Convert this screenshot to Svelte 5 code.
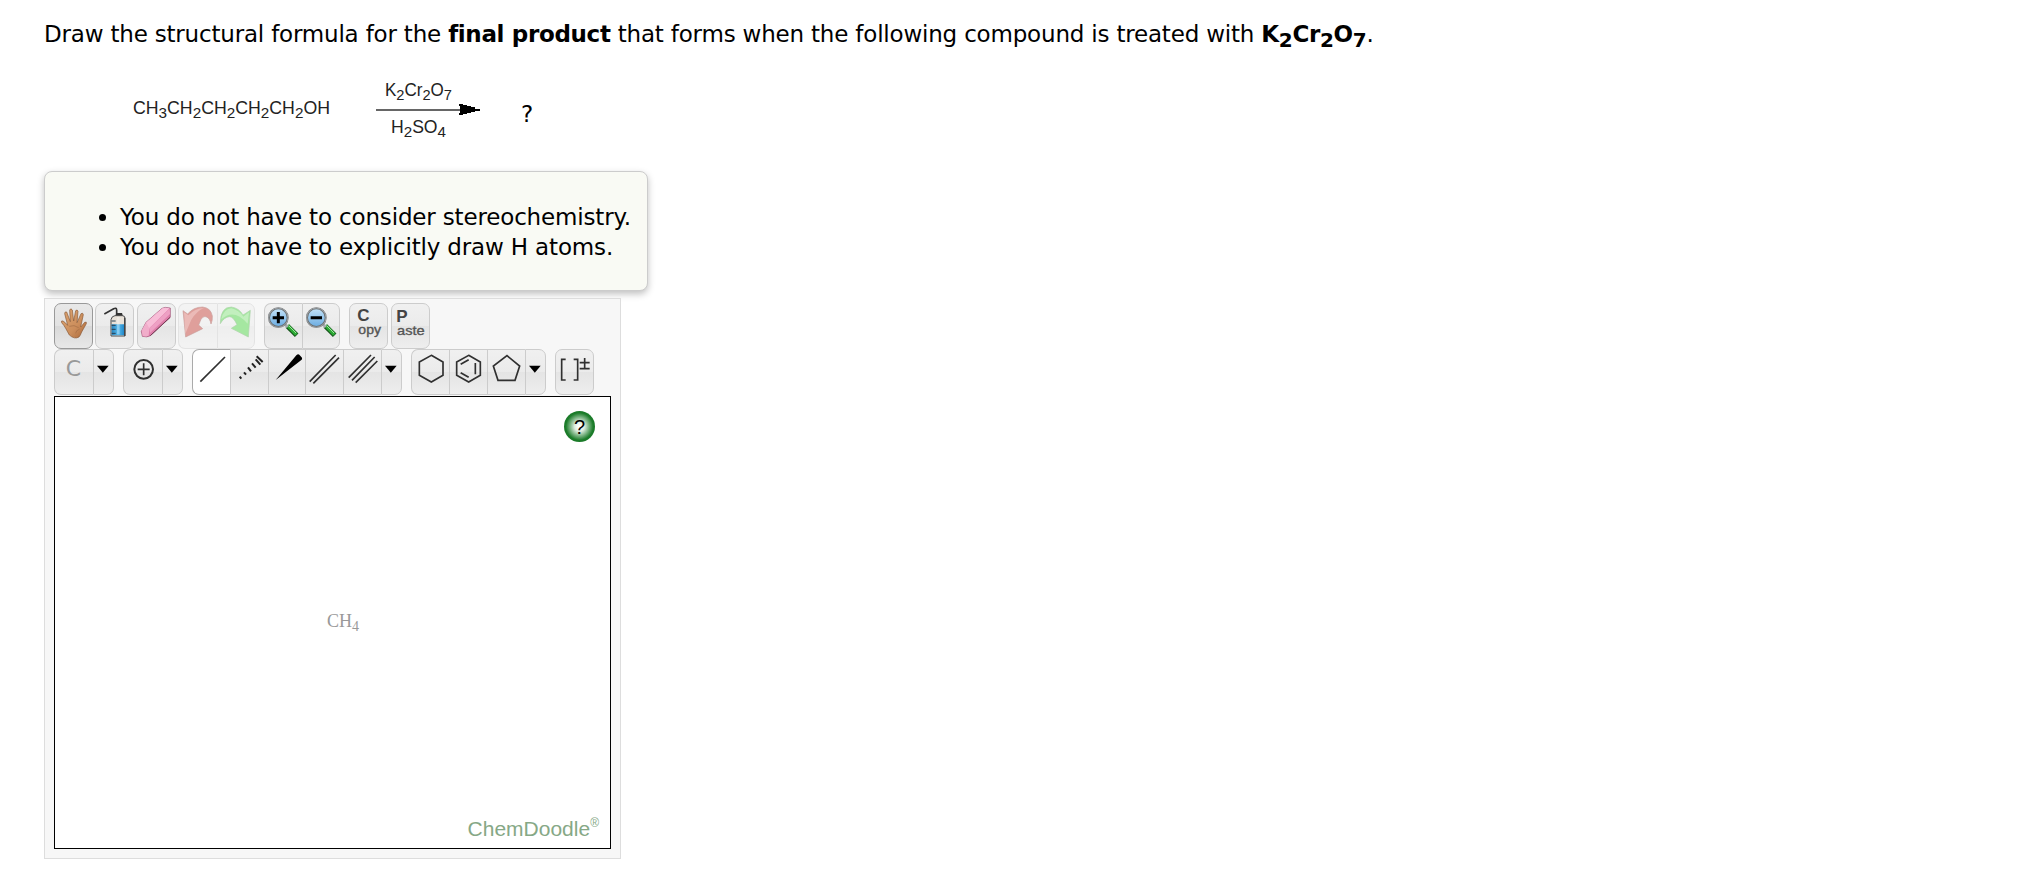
<script>
	// widths and gaps are in px, icons are drawn at three units per px
	const topRow = [
		{ gap: 0, buttons: [{ icon: 'hand', w: 39, dark: true }] },
		{ gap: 2, buttons: [{ icon: 'bottle', w: 39 }] },
		{ gap: 3, buttons: [{ icon: 'eraser', w: 39 }] },
		{ gap: 2, disabled: true, buttons: [{ icon: 'undo', w: 39 }, { icon: 'redo', w: 38 }] },
		{ gap: 9, buttons: [{ icon: 'zoomIn', w: 38 }, { icon: 'zoomOut', w: 38 }] },
		{ gap: 9, buttons: [{ icon: 'copy', w: 39 }] },
		{ gap: 3, buttons: [{ icon: 'paste', w: 39 }] }
	]

	const bottomRow = [
		{ gap: 0, buttons: [{ icon: 'carbon', w: 39 }, { icon: 'more', w: 21 }] },
		{ gap: 9, buttons: [{ icon: 'charge', w: 39 }, { icon: 'more', w: 21 }] },
		{ gap: 9, buttons: [
			{ icon: 'single', w: 38, active: true },
			{ icon: 'hash', w: 38 },
			{ icon: 'wedge', w: 37 },
			{ icon: 'double', w: 38 },
			{ icon: 'triple', w: 38 },
			{ icon: 'more', w: 21 }
		] },
		{ gap: 9, buttons: [
			{ icon: 'hexagon', w: 38 },
			{ icon: 'benzene', w: 38 },
			{ icon: 'pentagon', w: 38 },
			{ icon: 'more', w: 21 }
		] },
		{ gap: 9, buttons: [{ icon: 'bracket', w: 39 }] }
	]
</script>

{#snippet lens()}
	<path d='M70 69l28 28' stroke='#17551c' stroke-width='15' />
	<path d='M71 68l26 27' stroke='#2bab34' stroke-width='10' />
	<path d='M74 68l22 22' stroke='#9ee29c' stroke-width='3' />
	<path d='M62 63l9 9' stroke='#a7acae' stroke-width='9' />
	<circle cx='43' cy='44' r='28' fill='url(#glass)' stroke='#6c7072' stroke-width='6' />
	<circle cx='43' cy='44' r='29' fill='none' stroke='#b9bdbf' stroke-width='2' />
{/snippet}

{#snippet icon(name)}
	{#if name === 'hand'}
		<path d='M46 96C39 84 34 71 23 59q-3-7 4-5q7 4 14 13l-9-35q0-7 6-5l11 29l-2-35q3-7 8 0l4 33l6-31q5-5 7 2l-3 34l12-27q6-4 7 3l-8 37l12-14q7-3 5 4l-14 25q-4 11-8 15q-14 8-29-6z' fill='url(#skin)' stroke='#8a5a39' stroke-width='2' stroke-linejoin='round' />
		<path d='M46 70q14-6 28 4M65 91q0-8 12-13' fill='none' stroke='#a36d46' stroke-width='2' />
	{:else if name === 'bottle'}
		<path d='M28 33l28-16q8-4 9 4v16' fill='none' stroke='#343434' stroke-width='5' />
		<path d='M64 30h17l3 10H61z' fill='#333' />
		<path d='M48 50q2-11 12-12h22q8 0 8 8v53H48z' fill='#e9e2d9' stroke='#4b4b4b' stroke-width='3' />
		<path d='M50 64h38v33H50z' fill='url(#water)' />
		<path d='M89 44v55' stroke='#444' stroke-width='4' />
		<path d='M50 54h12M50 67h12M50 79h12M50 91h12' stroke='#294052' stroke-width='3' />
		<path d='M70 42v52' stroke='#fff' stroke-opacity='.3' stroke-width='8' />
	{:else if name === 'eraser'}
		<path d='M13 85l14-27L75 16q8-5 25-1v28L40 98q-10 6-24 2z' fill='#df7eab' stroke='#9c5575' stroke-width='2' stroke-linejoin='round' />
		<path d='M14 84l14-26L76 16q10-4 22 0L37 76z' fill='#f8bdd7' />
		<path d='M37 76l61-59 1 16-60 57z' fill='#eea0c4' />
		<path d='M14 84l14-25 9 17-2 22q-10 4-18 1z' fill='#f1adca' />
		<path d='M40 98l59-55' stroke='#713a52' stroke-width='3' />
	{:else if name === 'undo'}
		<path d='M15 23l14 10Q46 12 74 12q25 3 29 27 1 14-4 24-3-18-15-22-12-2-18 15l-4 10 12 11-51 25z' fill='#c3362e' stroke='#94372f' stroke-width='2' stroke-linejoin='round' />
		<path d='M18 28l13 9Q50 16 78 15q-22 9-38 35L22 92z' fill='#e98b84' opacity='.7' />
	{:else if name === 'redo'}
		<path d='M10 62Q10 12 43 12q23 3 35 24l22-14-6 80-51-26 17-11Q49 41 38 41 21 42 10 62z' fill='#44d43b' stroke='#57a751' stroke-width='2' stroke-linejoin='round' />
		<path d='M13 49q6-31 30-33 23 6 36 25l17-13-4 34Q50 14 13 49z' fill='#9eef96' opacity='.7' />
	{:else if name === 'zoomIn'}
		{@render lens()}
		<path d='M26 44h34M43 27v34' stroke='#000' stroke-width='9' />
	{:else if name === 'zoomOut'}
		{@render lens()}
		<path d='M26 44h34' stroke='#000' stroke-width='9' />
	{:else if name === 'copy'}
		<text x='25' y='55' class='initial'>C</text>
		<text x='28' y='93' class='rest' textLength='68' lengthAdjust='spacingAndGlyphs'>opy</text>
	{:else if name === 'paste'}
		<text x='16' y='56' class='initial'>P</text>
		<text x='18' y='95' class='rest' textLength='83' lengthAdjust='spacingAndGlyphs'>aste</text>
	{:else if name === 'carbon'}
		<text x='35' y='82' class='atom'>C</text>
	{:else if name === 'more'}
		<path d='M12 50h35L29.500 71z' fill='#000' />
	{:else if name === 'charge'}
		<g class='line'>
			<circle cx='62' cy='61' r='28' stroke-width='6' />
			<path d='M44 61h36M62 43v36' stroke-width='5' />
		</g>
	{:else if name === 'single'}
		<path class='line' d='M25 98l74-74' />
	{:else if name === 'hash'}
		<g fill='none' stroke='#222' stroke-width='6'>
			<path d='M29 83l5 6M42 70l6 7M54 55l9 12M66 43l11 13M77 31l14 16M80 22l18 17' />
		</g>
	{:else if name === 'wedge'}
		<path d='M23 93l62-74q5-5 9-2l8 9q2 5-3 8z' fill='#000' />
	{:else if name === 'double'}
		<path class='line' d='M14 98l78-80M25 103l77-77' />
	{:else if name === 'triple'}
		<path class='line' d='M17 86l67-68M27 94l68-70M38 101l65-65' />
	{:else if name === 'hexagon'}
		<path class='line' d='M61 19l35 20v40L61 99 25 79V39z' />
	{:else if name === 'benzene'}
		<path class='line' d='M59 19l35 20v40L59 99 23 79V39zM35 46l24-14M79 42v34M35 71l24 14' />
	{:else if name === 'pentagon'}
		<path class='line' d='M60 20l38 31-14 43H33L19 51z' />
	{:else if name === 'bracket'}
		<path class='line' d='M32 31H20v62h12M56 31h12v62H56M74 41h30M89 27v29M74 59h30' />
	{/if}
{/snippet}

{#snippet toolbar(groups)}
	<div class='toolbar'>
		{#each groups as group}
			<div class='group' class:disabled={group.disabled} style='margin-left: {group.gap}px'>
				{#each group.buttons as button}
					<button
						class:dark={button.dark}
						class:active={button.active}
						style='width: {button.w}px'
						aria-label={button.icon}
					>
						<svg viewBox='3 3 {button.w * 3 - 3} 132' width={button.w - 1} height='44'>
							{@render icon(button.icon)}
						</svg>
					</button>
				{/each}
			</div>
		{/each}
	</div>
{/snippet}

<svg class='defs' width='0' height='0'>
	<defs>
		<linearGradient id='skin' x2='1' y2='1'>
			<stop offset='0' stop-color='#dda673' />
			<stop offset='.6' stop-color='#cb8d5b' />
			<stop offset='1' stop-color='#a96637' />
		</linearGradient>
		<linearGradient id='water'>
			<stop offset='0' stop-color='#2783bd' />
			<stop offset='.5' stop-color='#5abbed' />
			<stop offset='1' stop-color='#1f86c8' />
		</linearGradient>
		<linearGradient id='glass' x2='0' y2='1'>
			<stop offset='0' stop-color='#c5e3f8' />
			<stop offset='1' stop-color='#69abe1' />
		</linearGradient>
	</defs>
</svg>

<main>
	<p class='question'>Draw the structural formula for the <b>final product</b> that forms when the following compound is treated with <b>K<sub>2</sub>Cr<sub>2</sub>O<sub>7</sub></b>.</p>

	<div class='reaction'>
		<svg width='352' height='70' viewBox='130 75 352 70'>
			<text x='133' y='114' textLength='197' lengthAdjust='spacingAndGlyphs'>CH<tspan class='sub' dy='4'>3</tspan><tspan dy='-4'>CH</tspan><tspan class='sub' dy='4'>2</tspan><tspan dy='-4'>CH</tspan><tspan class='sub' dy='4'>2</tspan><tspan dy='-4'>CH</tspan><tspan class='sub' dy='4'>2</tspan><tspan dy='-4'>CH</tspan><tspan class='sub' dy='4'>2</tspan><tspan dy='-4'>OH</tspan></text>
			<text x='385' y='96' textLength='67' lengthAdjust='spacingAndGlyphs'>K<tspan class='sub' dy='4'>2</tspan><tspan dy='-4'>Cr</tspan><tspan class='sub' dy='4'>2</tspan><tspan dy='-4'>O</tspan><tspan class='sub' dy='4'>7</tspan></text>
			<text x='391' y='133' textLength='55' lengthAdjust='spacingAndGlyphs'>H<tspan class='sub' dy='4'>2</tspan><tspan dy='-4'>SO</tspan><tspan class='sub' dy='4'>4</tspan></text>
			<path d='M376 110h104' stroke='#333' stroke-width='1.500' />
			<path d='M459 104h4v1h4v1h4v1h4v2h5v2h-5v1h-4v1h-4v1h-4v1h-4v-2h1v-7h-1z' fill='#000' />
		</svg>
		<span>?</span>
	</div>

	<div class='notes'>
		<ul>
			<li>You do not have to consider stereochemistry.</li>
			<li>You do not have to explicitly draw H atoms.</li>
		</ul>
	</div>

	<div class='sketcher'>
		{@render toolbar(topRow)}
		{@render toolbar(bottomRow)}
		<div class='canvas'>
			<button class='help'>?</button>
			<div class='molecule'>CH<sub>4</sub></div>
			<div class='brand'>ChemDoodle<sup>®</sup></div>
		</div>
	</div>
</main>

<style>
	:global(body) {
		background: #fff;
	}

	.defs {
		position: absolute;
	}

	main {
		padding: 19px 0 0 44px;
		color: #000;
		font: 23px/30px Verdana, 'DejaVu Sans', sans-serif;
		letter-spacing: -.16px;
	}

	.question {
		height: 30px;
		margin: 0;
		letter-spacing: -.19px;
		white-space: nowrap;

		b {
			letter-spacing: -.33px;
		}

		sub {
			font-size: 20px;
			line-height: 0;
			vertical-align: -5px;
		}
	}

	.reaction {
		display: flex;
		height: 96px;
		margin: 26px 0 0 86px;

		svg {
			flex: none;
		}

		text {
			font: 18px 'Liberation Sans', sans-serif;
			letter-spacing: 0;
			fill: #222;
		}

		.sub {
			font-size: 15.5px;
		}

		span {
			margin: 24px 0 0 39px;
		}
	}

	.notes {
		box-sizing: border-box;
		width: 604px;
		height: 120px;
		padding: 30px 0 0 36px;
		border: 1px solid #ccc;
		border-radius: 8px;
		background: #f9faf4;
		box-shadow: 0 3px 7px rgba(0, 0, 0, .25);

		ul {
			margin: 0;
			padding-left: 39px;
			white-space: nowrap;
		}
	}

	.sketcher {
		box-sizing: border-box;
		width: 577px;
		height: 561px;
		margin-top: 7px;
		padding: 4px 0 0 9px;
		border: 1px solid #ddd;
		background: #f7f7f7;
		letter-spacing: 0;
	}

	.toolbar {
		display: flex;
		height: 46px;
	}

	.toolbar + .toolbar {
		height: 47px;
	}

	.group {
		display: flex;

		&.disabled {
			opacity: .45;
		}

		button {
			box-sizing: border-box;
			height: 46px;
			padding: 0;
			border: 1px solid #ccc;
			border-right-width: 0;
			background: linear-gradient(#f0f0f0, #ebebeb 50%, #e4e4e4 50%, #eee);
			overflow: hidden;
		}

		button:first-child {
			border-radius: 7px 0 0 7px;
		}

		button:last-child {
			border-right-width: 1px;
			border-radius: 0 7px 7px 0;
		}

		button:only-child {
			border-radius: 7px;
		}

		.dark {
			border-color: #999;
			background: linear-gradient(#e8e8e8, #e2e2e2 50%, #d8d8d8 50%, #e8e8e8);
		}

		.active {
			border-color: #aaa;
			background: #fff;
		}

		svg {
			display: block;
		}
	}

	.line {
		fill: none;
		stroke: #303030;
		stroke-width: 5;
	}

	.initial {
		font: bold 51px 'Liberation Sans', sans-serif;
		fill: #444;
	}

	.rest {
		font: 37px 'Liberation Sans', sans-serif;
		fill: #555;
		stroke: #555;
		stroke-width: 1;
	}

	.atom {
		font: 66px 'DejaVu Sans', sans-serif;
		fill: #999;
	}

	.canvas {
		box-sizing: border-box;
		position: relative;
		display: grid;
		place-items: center;
		width: 557px;
		height: 453px;
		border: 1px solid #000;
		background: #fff;
	}

	.help {
		position: absolute;
		top: 14px;
		right: 15px;
		width: 31px;
		height: 31px;
		padding: 0;
		border: 0;
		border-radius: 50%;
		background: radial-gradient(circle, #fff 5%, #e0eee1 22%, #1d7d2b 62%, #096c18);
		color: #000;
		font: 20px/28px 'Liberation Sans', sans-serif;
	}

	.molecule {
		padding: 0 0 3px 21px;
		color: #999;
		font: 18px/20px 'Liberation Serif', serif;

		sub {
			font-size: 14px;
			line-height: 0;
			vertical-align: -4px;
		}
	}

	.brand {
		position: absolute;
		right: 11px;
		bottom: 7px;
		color: #86a886;
		font: 21px/24px 'Liberation Sans', sans-serif;

		sup {
			font-size: 12px;
			line-height: 0;
			vertical-align: 9px;
		}
	}
</style>
